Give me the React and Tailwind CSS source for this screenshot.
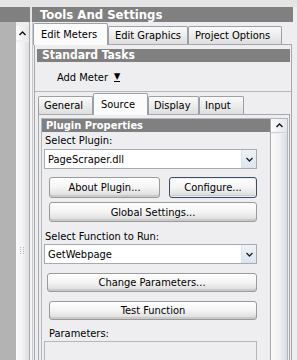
import React from 'react';

const UpArrow = () => (
  <svg width="7" height="5" viewBox="0 0 7 5">
    <path d="M0.5 4 L3.5 1 L6.5 4" stroke="#111" strokeWidth="1.4" fill="none" />
  </svg>
);

const DownArrow = () => (
  <svg width="7" height="5" viewBox="0 0 7 5">
    <path d="M0.5 1 L3.5 4 L6.5 1" stroke="#222" strokeWidth="1.4" fill="none" />
  </svg>
);

const Grip = () => (
  <svg width="6" height="8" viewBox="0 0 6 8">
    {[0, 2, 4, 6].map((y) => (
      <g key={y}>
        <rect x="0" y={y} width="1" height="1" fill="#b8b8b8" />
        <rect x="3" y={y} width="1" height="1" fill="#b8b8b8" />
      </g>
    ))}
  </svg>
);

const Button = ({ children, className = '', focused = false }) => (
  <div
    className={`flex items-center justify-center rounded-[3px] border bg-gradient-to-b from-[#ffffff] via-[#f4f4f4] to-[#d9d9d9] ${
      focused
        ? 'border-[#3f4c63] shadow-[inset_0_0_0_1px_#e9eef6,inset_0_-2px_0_#cacaca]'
        : 'border-[#9a9a9a] shadow-[inset_0_-2px_0_#cacaca]'
    } ${className}`}
  >
    {children}
  </div>
);

const Combo = ({ value }) => (
  <div className="ml-[2px] w-[213px] h-[20px] flex border border-[#a7abb0] bg-white">
    <div className="flex-1 pl-[3px] flex items-center">{value}</div>
    <div className="w-[15px] flex items-center justify-center bg-gradient-to-b from-[#eef2f8] to-[#dde5f0] border-l border-[#dfe3e8]">
      <DownArrow />
    </div>
  </div>
);

const Tab = ({ label, selected, className = '' }) => (
  <div
    className={`flex items-center border border-[#9aa0a6] rounded-t-[2px] ${
      selected
        ? 'h-[22px] bg-[#fbfbfc] border-b-0 relative z-10 -mb-px'
        : 'h-[18px] bg-gradient-to-b from-[#fafafa] to-[#dedede] border-b-0'
    } ${className}`}
  >
    {label}
  </div>
);

export default function App() {
  return (
    <div className="w-[297px] h-[360px] overflow-hidden bg-[#eeeef0] flex flex-col text-[11px] leading-[13px] text-black font-['DejaVu_Sans_Condensed','DejaVu_Sans',sans-serif] [font-stretch:condensed]">
      <div className="h-[7px] shrink-0 bg-[#e4e4e4]" />
      <div className="h-[15px] shrink-0 flex">
        <div className="w-[30px] bg-[#808080]" />
        <div className="w-[2px] bg-[#e4e4e4]" />
        <div className="flex-1 bg-[#808080] text-white font-bold text-[13px] leading-[15px] pl-[8px]">
          Tools And Settings
        </div>
        <div className="w-[4px] bg-[#eeeef0]" />
      </div>

      <div className="flex flex-1 min-h-0">
        {/* left docked strip */}
        <div className="w-[16px] bg-[#b3b3b3]" />
        <div className="w-[13px] pt-[4px] flex flex-col">
          <div className="h-[14px] flex items-center justify-center bg-gradient-to-r from-[#fdfdfd] to-[#e6e6ea]">
            <UpArrow />
          </div>
          <div className="flex-1 mt-[2px] bg-gradient-to-r from-[#fbfbfb] via-[#f2f2f4] to-[#dcdce2] flex flex-col items-center pt-[205px]">
            <Grip />
          </div>
        </div>
        <div className="w-[4px] border-l border-[#a8a8a8] border-r border-r-[#c8c8c8] bg-[#f4f4f4]" />

        {/* main panel */}
        <div className="flex-1 flex flex-col pt-[1px]">
          <div className="flex items-end h-[21px]">
            <Tab label="Edit Meters" selected className="w-[75px] pl-[7px]" />
            <Tab label="Edit Graphics" className="w-[80px] pl-[6px]" />
            <Tab label="Project Options" className="w-[94px] pl-[6px]" />
          </div>

          <div className="flex-1 mr-[5px] ml-[1px] border border-[#a4a8ad] border-b-0 flex flex-col">
            {/* Standard tasks */}
            <div className="h-[47px] border-b border-[#b3b6ba] flex flex-col">
              <div className="mt-[4px] ml-[2px] mr-[1px] h-[13px] bg-[#808080] text-white font-bold text-[12px] pl-[5px] leading-[13px]">
                Standard Tasks
              </div>
              <div className="flex-1 flex items-center pl-[22px] gap-[6px] pt-[1px]">
                <span>Add Meter</span>
                <span className="text-[9px] leading-[9px] border-b border-black">▼</span>
              </div>
            </div>

            {/* inner tabs */}
            <div className="flex items-end h-[22px] ml-[3px]">
              <Tab label="General" className="w-[55px] pl-[5px]" />
              <Tab label="Source" selected className="w-[55px] pl-[7px]" />
              <Tab label="Display" className="w-[51px] pl-[5px]" />
              <Tab label="Input" className="w-[45px] pl-[5px]" />
            </div>

            <div className="flex-1 ml-[3px] mr-[1px] border border-[#a4a8ad] border-b-0 pt-[3px] pl-[2px] pr-[1px] flex">
              <div className="flex-1 border border-[#b3b6ba] border-b-0 flex">
                <div className="flex-1 flex flex-col">
                  <div className="h-[13px] bg-[#808080] text-white font-bold pl-[4px] leading-[13px]">
                    Plugin Properties
                  </div>
                  <div className="mt-[2px] pl-[3px] h-[12px]">Select Plugin:</div>
                  <div className="mt-[3px]">
                    <Combo value="PageScraper.dll" />
                  </div>
                  <div className="mt-[8px] flex ml-[7px] gap-[9px]">
                    <Button className="w-[111px] h-[21px]">About Plugin...</Button>
                    <Button focused className="w-[88px] h-[21px]">Configure...</Button>
                  </div>
                  <Button className="mt-[4px] ml-[7px] w-[208px] h-[20px]">Global Settings...</Button>
                  <div className="mt-[8px] pl-[3px] h-[12px]">Select Function to Run:</div>
                  <div className="mt-[2px]">
                    <Combo value="GetWebpage" />
                  </div>
                  <Button className="mt-[9px] ml-[5px] w-[210px] h-[19px]">Change Parameters...</Button>
                  <Button className="mt-[9px] ml-[7px] w-[208px] h-[19px]">Test Function</Button>
                  <div className="mt-[7px] pl-[7px] h-[12px]">Parameters:</div>
                  <div className="mt-[2px] ml-[2px] w-[213px] h-[40px] border border-[#b3b6ba] bg-[#eeeef0]" />
                </div>
                <div className="w-[17px] border-l border-[#a8a8a8] flex flex-col">
                  <div className="h-[14px] flex items-center justify-center bg-gradient-to-r from-[#fdfdfd] to-[#e4e6ec] border-b border-[#d0d0d4]">
                    <UpArrow />
                  </div>
                  <div className="flex-1 mt-[1px] bg-gradient-to-r from-[#fbfbfb] via-[#f2f2f4] to-[#d8dce6]" />
                </div>
              </div>
            </div>
          </div>
        </div>
      </div>
    </div>
  );
}
